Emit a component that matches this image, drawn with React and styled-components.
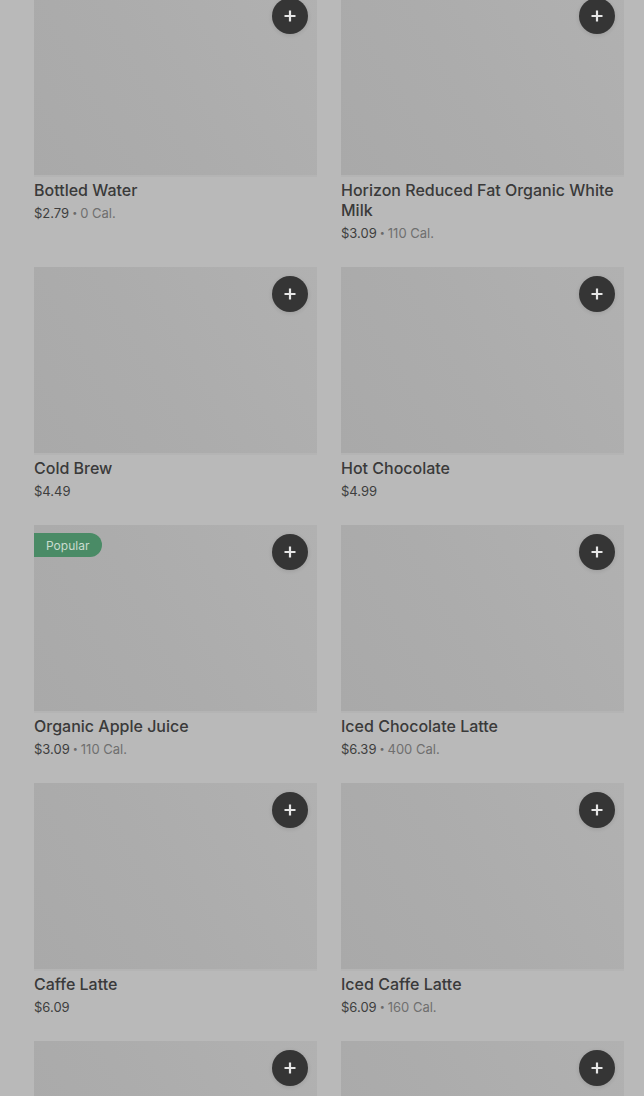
import styled, { createGlobalStyle } from "styled-components"

const GlobalStyle = createGlobalStyle`
  html, body {
    margin: 0;
    padding: 0;
    background: #b9b9b9;
    font-family: Inter, "Noto Sans", Roboto, sans-serif;
    overflow: hidden;
  }
`

const items = [
  { name: "Bottled Water", price: "$2.79", cal: "0 Cal." },
  { name: "Horizon Reduced Fat Organic White Milk", price: "$3.09", cal: "110 Cal." },
  { name: "Cold Brew", price: "$4.49" },
  { name: "Hot Chocolate", price: "$4.99" },
  { name: "Organic Apple Juice", price: "$3.09", cal: "110 Cal.", popular: true },
  { name: "Iced Chocolate Latte", price: "$6.39", cal: "400 Cal." },
  { name: "Caffe Latte", price: "$6.09" },
  { name: "Iced Caffe Latte", price: "$6.09", cal: "160 Cal." },
  { name: "Caramel Macchiato", price: "$6.29" },
  { name: "Iced Caramel Macchiato", price: "$6.29" },
]

const App = () => {
  return (
    <>
      <GlobalStyle />
      <Viewport>
        <Grid>
          {items.map((item) => (
            <Card key={item.name}>
              <Thumb>
                {item.popular && <Badge>Popular</Badge>}
                <AddButton aria-label="Add">
                  <svg width="14" height="14" viewBox="0 0 14 14">
                    <path d="M7 1.5v11M1.5 7h11" stroke="#e6e6e6" strokeWidth="2.2" />
                  </svg>
                </AddButton>
              </Thumb>
              <Title>{item.name}</Title>
              <Meta>
                <Price>{item.price}</Price>
                {item.cal && (
                  <>
                    <Dot>•</Dot>
                    <Cal>{item.cal}</Cal>
                  </>
                )}
              </Meta>
            </Card>
          ))}
        </Grid>
      </Viewport>
    </>
  )
}

export default App

const Viewport = styled.div`
  height: 1096px;
  overflow: hidden;
`
const Grid = styled.div`
  display: grid;
  grid-template-columns: 283px 283px;
  column-gap: 24px;
  row-gap: 24px;
  padding: 0 20px 0 34px;
  margin-top: -11px;
`
const Card = styled.div`
  display: flex;
  flex-direction: column;
`
const Thumb = styled.div`
  position: relative;
  height: 186px;
  background: linear-gradient(60deg, #a9a9a9 0%, #acacac 45%, #b1b1b1 100%);
  border-bottom: 2px solid #b4b4b4;
  margin-bottom: 3px;
`
const Badge = styled.span`
  position: absolute;
  top: 8px;
  left: 0;
  height: 24px;
  padding: 0 13px 0 12px;
  display: flex;
  align-items: center;
  background: #4a8b66;
  color: #c9dccf;
  font-size: 12px;
  border-radius: 0 12px 12px 0;
`
const AddButton = styled.button`
  position: absolute;
  top: 9px;
  right: 9px;
  width: 36px;
  height: 36px;
  border-radius: 50%;
  border: none;
  padding: 0;
  background: #353535;
  display: flex;
  align-items: center;
  justify-content: center;
  box-shadow: 0 1px 4px rgba(0, 0, 0, 0.12);
`
const Title = styled.div`
  font-size: 16px;
  font-weight: 500;
  line-height: 20px;
  color: #3a3a3a;
  padding-right: 8px;
`
const Meta = styled.div`
  margin-top: 3px;
  font-size: 13px;
  line-height: 20px;
  display: flex;
  align-items: center;
  gap: 3px;
`
const Price = styled.span`
  color: #3e3e3e;
`
const Dot = styled.span`
  color: #6a6a6a;
  font-size: 9px;
`
const Cal = styled.span`
  color: #6f6f6f;
`
